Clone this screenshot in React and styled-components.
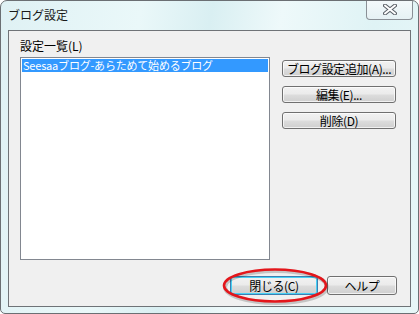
import React from "react";
import styled, { createGlobalStyle } from "styled-components";

const Global = createGlobalStyle`
  html, body { margin: 0; padding: 0; background: #ffffff; }
  body { width: 419px; height: 314px; overflow: hidden; }
`;

const FONT = `"Noto Sans CJK JP", "Liberation Sans", sans-serif`;

const Window = styled.div`
  position: relative;
  box-sizing: border-box;
  width: 419px;
  height: 314px;
  border: 1px solid #6b6f73;
  border-radius: 7px 7px 5px 5px;
  background: linear-gradient(100deg, #dff1f4 0%, #eaf8f9 30%, #d9eff2 45%, #eef9fa 60%, #dff3f5 80%, #e8f7f8 100%);
  display: flex;
  flex-direction: column;
  font-family: ${FONT};
  font-size: 12px;
  color: #000;
  overflow: hidden;
`;

const TitleBar = styled.div`
  height: 29px;
  display: flex;
  align-items: flex-start;
  justify-content: space-between;
  padding-left: 7px;
`;

const Title = styled.div`
  margin-top: 6px;
  font-size: 12px;
  line-height: 16px;
  color: #1a1a1a;
`;

const CloseButton = styled.div`
  box-sizing: border-box;
  width: 47px;
  height: 20px;
  margin-top: -1px;
  margin-right: 5px;
  border: 1px solid #8a9096;
  border-top: none;
  border-radius: 0 0 4px 4px;
  background: linear-gradient(#f4fafb, #e6f1f4);
  display: flex;
  align-items: center;
  justify-content: center;
`;

const Client = styled.div`
  box-sizing: border-box;
  flex: 1;
  margin: 0 7px 6px 7px;
  border: 1px solid #6f7377;
  background: #f0f0f0;
  display: flex;
  flex-direction: column;
  padding: 0 13px 11px 11px;
`;

const Body = styled.div`
  display: flex;
  gap: 12px;
`;

const ListColumn = styled.div`
  display: flex;
  flex-direction: column;
`;

const Label = styled.div`
  margin-top: 7px;
  height: 15px;
  line-height: 15px;
  margin-bottom: 4px;
  font-size: 12px;
`;

const ListBox = styled.div`
  box-sizing: border-box;
  width: 250px;
  height: 203px;
  border: 1px solid #828790;
  background: #ffffff;
  padding: 1px;
`;

const ListItem = styled.div`
  height: 13px;
  line-height: 13px;
  padding-left: 1px;
  font-size: 11px;
  letter-spacing: -0.2px;
  white-space: nowrap;
  background: ${(p) => (p.$selected ? "#3399ff" : "transparent")};
  color: ${(p) => (p.$selected ? "#ffffff" : "#000000")};
`;

const ButtonColumn = styled.div`
  display: flex;
  flex-direction: column;
  gap: 9px;
  padding-top: 29px;
`;

const Button = styled.div`
  box-sizing: border-box;
  width: ${(p) => p.$w}px;
  height: ${(p) => p.$h}px;
  border: 1px solid #707070;
  border-radius: 3px;
  background: linear-gradient(#f2f2f2 0%, #ebebeb 48%, #dddddd 52%, #cfcfcf 100%);
  box-shadow: inset 0 0 0 1px rgba(255, 255, 255, 0.7);
  display: flex;
  align-items: center;
  justify-content: center;
  font-size: 12px;
  line-height: 1;
  white-space: nowrap;
  letter-spacing: -0.4px;
`;

const DefaultButton = styled(Button)`
  border-color: #3c7fb1;
  box-shadow: inset 0 0 0 1px #48d0f4;
`;

const Footer = styled.div`
  margin-top: auto;
  display: flex;
  justify-content: flex-end;
  gap: 9px;
`;

const Annotation = styled.svg`
  position: absolute;
  left: 218px;
  top: 263px;
  pointer-events: none;
`;

function CloseGlyph() {
  return (
    <svg width="14" height="11" viewBox="0 0 14 11">
      <path d="M2 1.5 L12 9.5 M12 1.5 L2 9.5" stroke="#5b6168" strokeWidth="4" strokeLinecap="round" />
      <path d="M2 1.5 L12 9.5 M12 1.5 L2 9.5" stroke="#ffffff" strokeWidth="2" strokeLinecap="round" />
    </svg>
  );
}

export default function App() {
  return (
    <>
      <Global />
      <Window>
        <TitleBar>
          <Title>ブログ設定</Title>
          <CloseButton>
            <CloseGlyph />
          </CloseButton>
        </TitleBar>
        <Client>
          <Body>
            <ListColumn>
              <Label>設定一覧(L)</Label>
              <ListBox>
                <ListItem $selected>Seesaaブログ-あらためて始めるブログ</ListItem>
              </ListBox>
            </ListColumn>
            <ButtonColumn>
              <Button $w={114} $h={17}>ブログ設定追加(A)...</Button>
              <Button $w={114} $h={17}>編集(E)...</Button>
              <Button $w={114} $h={17}>削除(D)</Button>
            </ButtonColumn>
          </Body>
          <Footer>
            <DefaultButton $w={88} $h={19}>閉じる(C)</DefaultButton>
            <Button $w={70} $h={19}>ヘルプ</Button>
          </Footer>
        </Client>
        <Annotation width="114" height="44" viewBox="0 0 114 44">
          <ellipse cx="57" cy="23" rx="51" ry="16" fill="none" stroke="rgba(0,0,0,0.18)" strokeWidth="4" />
          <ellipse cx="56" cy="21.5" rx="51" ry="16" fill="none" stroke="#e3161b" strokeWidth="2.6" />
        </Annotation>
      </Window>
    </>
  );
}
